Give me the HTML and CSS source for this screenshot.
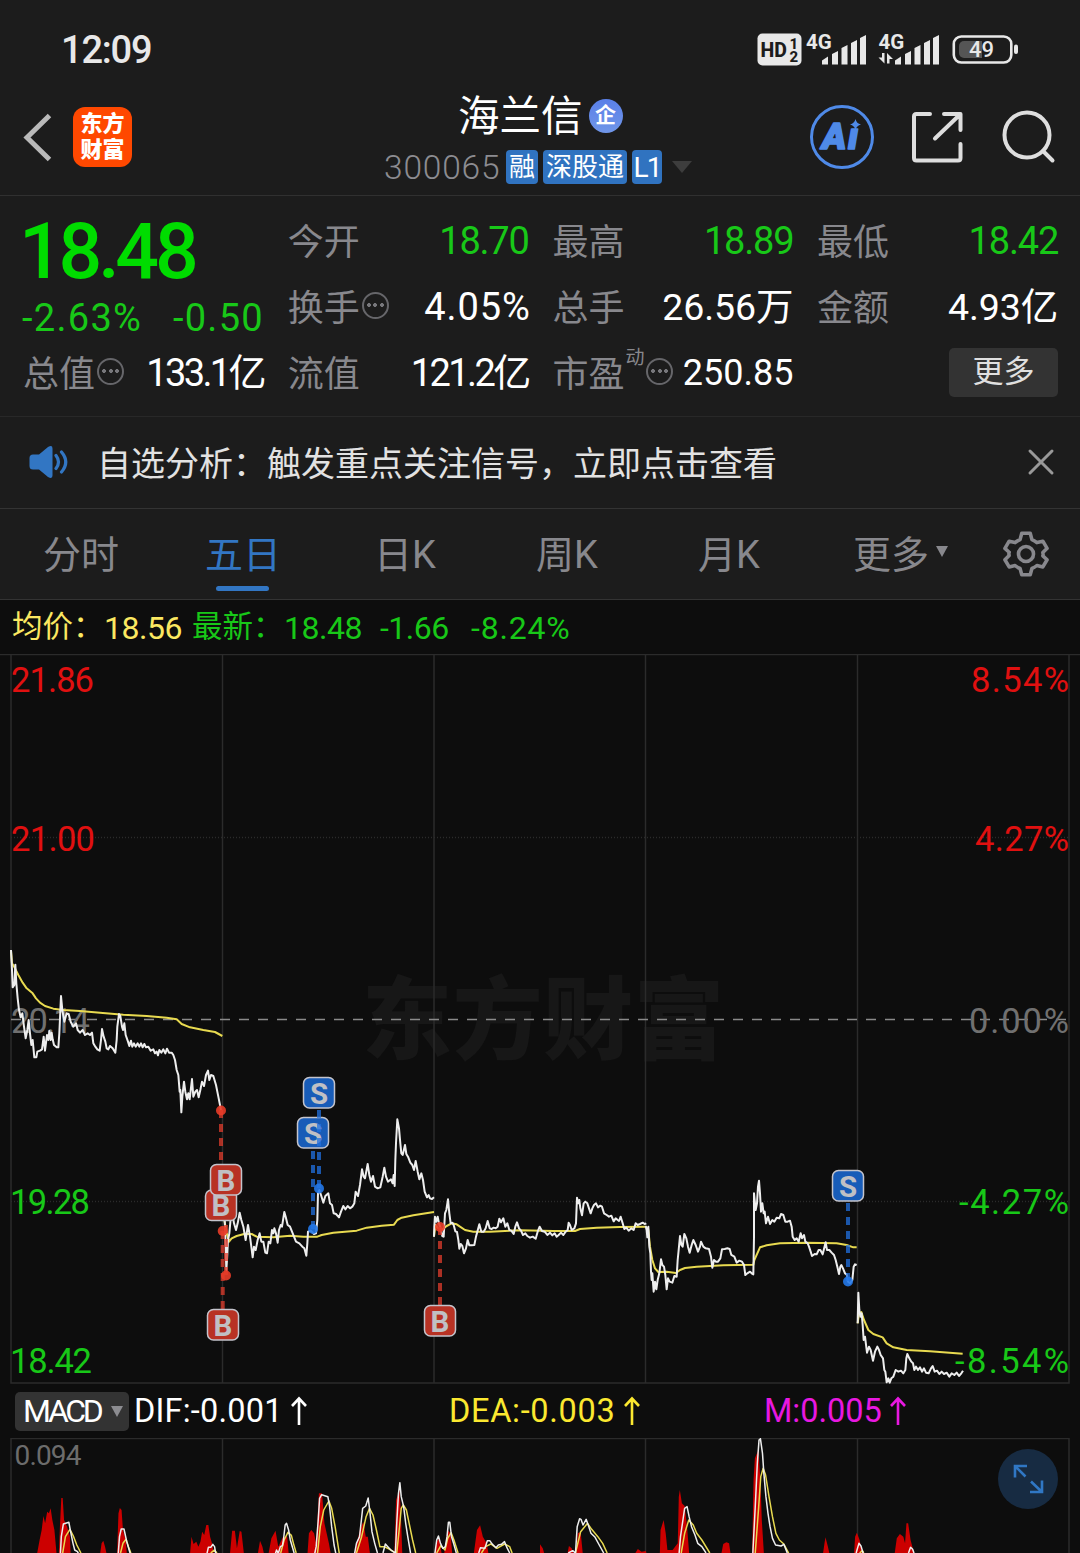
FILE: index.html
```html
<!DOCTYPE html>
<html lang="zh-CN">
<head>
    <meta charset="UTF-8">
    <meta name="viewport" content="width=device-width, initial-scale=1.0">
    <title>海兰信 300065</title>
    <link rel="stylesheet" href="styles.css">
</head>
<body>
    <div class="status-bar">
        <span class="time">12:09</span>
        <svg class="status-icons" width="264" height="36" viewBox="756 32 264 36">
            <rect x="757.500" y="33.500" width="44" height="32" rx="5" fill="#e8e8e8"/>
            <g fill="#1c1c1c" font-weight="800">
                <text x="760.500" y="56.500" font-size="19.500">HD</text>
                <text x="789.500" y="48.500" font-size="15">1</text>
                <text x="789.500" y="62" font-size="15">2</text>
            </g>
            <g fill="#e8e8e8" font-weight="700" font-size="20.500">
                <text x="806" y="49">4G</text>
                <text x="878.500" y="49">4G</text>
            </g>
            <g fill="#e8e8e8">
                <path d="M822 64.500v-4l6-4v8zM832 64.500V54l6-3v13.500zM841.500 64.500V48l6-3v19.500zM851 64.500V43l6-3v24.500zM860 64.500V38l6-3v29.500z"/>
                <path d="M895 64.500v-4l6-4v8zM905 64.500V54l6-3v13.500zM914.500 64.500V48l6-3v19.500zM924 64.500V43l6-3v24.500zM933 64.500V38l6-3v29.500z"/>
                <path d="M882 53h2.500v10.500l-6-6h3.500zM887 63.500V53l6 6h-3.500v4.500z"/>
                <rect x="1014" y="44.500" width="4" height="9.500" rx="2"/>
            </g>
            <rect x="953.800" y="36.500" width="57.500" height="26" rx="7.500" fill="none" stroke="#e8e8e8" stroke-width="2.600"/>
            <path d="M964 41h18v17h-18a5 5 0 0 1-5-5v-7a5 5 0 0 1 5-5z" fill="#555"/>
            <text x="969" y="57" font-size="22" font-weight="500" fill="#e8e8e8">49</text>
        </svg>
    </div>

    <header class="header">
        <svg class="back" width="30" height="50" viewBox="0 0 30 50"><path d="M27.500 3.500L5 25.500l22.500 22" fill="none" stroke="#b9b9b9" stroke-width="5"/></svg>
        <div class="logo"><span>东方</span><span>财富</span></div>
        <div class="title">
            <div class="name">海兰信<span class="corp">企</span></div>
            <div class="code">
                <span class="code-num">300065</span>
                <span class="tag">融</span><span class="tag wide">深股通</span><span class="tag l1">L1</span>
                <i class="caret"></i>
            </div>
        </div>
        <svg class="tools" width="250" height="66" viewBox="808 104 250 66">
            <circle cx="842" cy="137" r="30.500" fill="none" stroke="#4f8ae8" stroke-width="3"/>
            <text class="ai" x="822 848" y="149">Aı</text>
            <path d="M855.500 119q1 4.500 5.500 5.500q-4.500 1.200-5.500 5.500q-1-4.300-5.500-5.500q4.500-1.200 5.500-5.500z" fill="#4f8ae8"/>
            <g fill="none" stroke="#dedede" stroke-width="4" stroke-linecap="round" stroke-linejoin="round">
                <path d="M930 114h-13.500q-2.500 0-2.500 2.500v41.500q0 2.500 2.500 2.500h41.500q2.500 0 2.500-2.500v-14M944 114h16.500v16M960 114.500l-25 24"/>
                <circle cx="1027" cy="135" r="22.500"/>
                <path d="M1043 151l9.500 9.500"/>
            </g>
        </svg>
    </header>

    <section class="quote">
        <div class="price-block">
            <div class="price">18.48</div>
            <div class="change"><span>-2.63%</span><span>-0.50</span></div>
        </div>
        <div class="cell"><label>今开</label><b class="green">18.70</b></div>
        <div class="cell"><label>最高</label><b class="green">18.89</b></div>
        <div class="cell"><label>最低</label><b class="green">18.42</b></div>
        <div class="cell"><label>换手</label><i class="dots"></i><b class="pct">4.05%</b></div>
        <div class="cell"><label>总手</label><b class="flat">26.56万</b></div>
        <div class="cell"><label>金额</label><b class="flat">4.93亿</b></div>
        <div class="cell"><label>总值</label><i class="dots"></i><b class="tight">133.1亿</b></div>
        <div class="cell"><label>流值</label><b class="tight">121.2亿</b></div>
        <div class="cell"><label>市盈<sup>动</sup></label><i class="dots pe"></i><b class="small">250.85</b></div>
        <div class="cell"><button class="more-btn">更多</button></div>
    </section>

    <div class="notice">
        <svg width="40" height="34" viewBox="0 0 40 34">
            <path d="M4 9.500h6L19 2q4.500-2.500 4.500 1.500v27q0 4-4.500 1.500l-9-7.500H4q-3.500 0-3.500-3.500v-8q0-3.500 3.500-3.500z" fill="#3276c3"/>
            <path d="M27 10.500q5 6.500 0 13M32.500 7q8.500 10 0 20" fill="none" stroke="#3276c3" stroke-width="3.200" stroke-linecap="round"/>
        </svg>
        <span>自选分析：触发重点关注信号，立即点击查看</span>
        <svg class="close" width="28" height="28" viewBox="0 0 28 28"><path d="M3 3l22 22M25 3L3 25" stroke="#999" stroke-width="3" stroke-linecap="round"/></svg>
    </div>

    <nav class="tabs">
        <a>分时</a>
        <a class="active">五日</a>
        <a>日K</a>
        <a>周K</a>
        <a>月K</a>
        <a class="more">更多<i></i></a>
        <svg width="48" height="48" viewBox="-25.500 -25.500 51 51" fill="none" stroke="#88888d" stroke-width="3.800" stroke-linejoin="round">
            <path d="M-4.500-22h9l1.800 6.700q3 1.200 5.300 3.200l6.300-1.500l4.500 7.600l-4.500 4.500q.6 3 0 3.500l4.500 4.100l-4.500 7.600l-6.300-1.500q-2.300 2-5.300 3.200l-1.800 6.600h-9l-1.800-6.600q-3-1.200-5.300-3.200l-6.300 1.500l-4.500-7.600l4.500-4.500q-.6-3 0-3.500l-4.500-4.100l4.500-7.600l6.300 1.500q2.300-2 5.300-3.200z"/>
            <circle r="8"/>
        </svg>
    </nav>

    <div class="legend">
        <span class="avg cn">均价：</span><span class="avg">18.56</span>
        <span class="cn">最新：</span><span>18.48</span><span>-1.66</span><span class="chg">-8.24%</span>
    </div>

    <svg class="chart" width="1080" height="730" viewBox="0 654 1080 730">
        <text class="watermark" x="362" y="1052" textLength="362">东方财富</text>
        <g class="grid">
            <path d="M0 654.500H1080" />
            <path d="M11 655V1383H1069V655M222.500 655V1383M434 655V1383M645.500 655V1383M857.500 655V1383"/>
            <path d="M11 837.500H1069M11 1201.500H1069" stroke-dasharray="1 2"/>
            <path class="zero" d="M11 1019.500H1069"/>
        </g>
        <g class="axis">
            <text class="up" x="11" y="692" textLength="83">21.86</text>
            <text class="up" x="11" y="851" textLength="84">21.00</text>
            <text class="mid" x="11" y="1033" textLength="79">20.14</text>
            <text class="down" x="10" y="1214" textLength="80">19.28</text>
            <text class="down" x="10" y="1373" textLength="82">18.42</text>
            <text class="up" x="971" y="692" textLength="98">8.54%</text>
            <text class="up" x="975" y="851" textLength="94">4.27%</text>
            <text class="mid" x="969" y="1033" textLength="100">0.00%</text>
            <text class="down" x="959" y="1214" textLength="110">-4.27%</text>
            <text class="down" x="955" y="1373" textLength="114">-8.54%</text>
        </g>
        <!-- day 1 -->
        <g class="series" transform="translate(0 930) scale(.33333)">
            <polyline class="line-avg" points="33,62 36,100 45,115 55,135 68,158 80,175 98,190 108,205 120,218 135,228 160,236 190,240 240,243 300,248 370,254 440,258 500,263 530,268 545,282 570,292 610,300 645,306 667,318"/>
            <polyline points="33,60 36,120 38,172 43,165 46,104 49,160 53,205 57,240 62,262 67,250 72,290 77,325 82,300 86,270 90,310 94,345 98,330 103,382 109,382 112,365 120,362 126,358 131,320 135,362 141,315 145,330 148,303 152,330 155,308 158,328 162,345 170,352 175,352 178,310 183,198 187,240 193,275 200,250 206,252 212,275 220,290 228,280 233,300 240,308 248,300 255,315 263,310 270,315 276,308 280,340 286,350 292,358 299,362 303,330 306,297 311,320 316,335 320,355 325,358 330,348 338,355 346,368 350,330 352,290 357,252 361,258 366,290 369,300 373,280 377,315 384,335 388,348 393,332 397,350 402,340 407,350 413,340 418,350 423,340 428,352 433,342 438,352 445,350 452,362 460,358 465,370 470,365 474,376 478,360 484,368 490,358 496,370 501,356 507,368 515,368 520,375 525,390 530,420 535,435 539,485 541,480 544,547 547,500 552,455 556,485 561,508 565,490 569,508 576,447 580,500 586,485 591,480 596,502 601,480 606,455 612,468 618,435 624,422 628,450 633,435 640,438 648,465 655,500 663,540"/>
        </g>
        <!-- day 2 -->
        <g class="series" transform="translate(190 1060) scale(.33333)">
            <polyline class="line-avg" points="99,440 103,480 110,520 117,545 125,535 140,528 165,521 185,522 200,530 250,532 300,527 340,530 382,530 395,525 430,518 500,512 530,503 575,497 612,494 622,480 635,473 670,466 732,456"/>
            <polyline points="100,400 104,480 107,560 109,630 111,600 114,540 118,520 122,475 128,465 132,490 138,510 143,490 149,458 154,480 160,500 167,540 174,495 180,530 184,560 188,592 192,560 197,570 203,540 209,520 214,545 220,545 226,578 231,580 236,545 241,550 246,510 250,520 253,505 258,520 263,548 267,510 272,495 276,500 283,456 287,470 293,495 300,500 306,515 312,530 318,545 328,550 337,560 343,565 349,587 352,550 354,515 362,512 372,522 378,520 382,480 384,400 388,390 393,405 400,428 406,408 415,400 420,430 426,435 431,460 438,462 447,472 453,455 460,438 466,448 473,438 480,445 487,440 493,430 497,395 504,408 510,375 516,328 521,350 525,355 533,312 538,345 543,365 549,348 555,380 563,385 571,382 578,350 583,323 588,350 594,365 603,358 608,370 611,345 614,378 616,300 618,250 622,178 627,205 631,250 634,280 638,285 641,272 645,255 649,282 654,290 661,308 667,315 672,330 677,303 683,335 688,358 694,340 699,360 704,395 711,412 716,405 720,415 726,417 732,412"/>
        </g>
        <!-- day 3 -->
        <g class="series" transform="translate(420 1160) scale(.33333)">
            <polyline class="line-avg" points="42,230 46,195 55,205 65,210 80,198 95,190 110,193 120,200 135,210 160,215 210,215 300,211 400,213 465,213 480,207 530,203 600,201 679,200"/>
            <polyline points="42,230 43,200 45,170 49,185 53,170 57,190 62,205 67,228 71,230 75,160 79,150 84,118 88,160 92,190 97,188 101,195 106,214 111,216 115,240 118,266 122,252 127,258 132,280 138,265 143,240 148,256 155,256 163,255 168,230 172,215 178,193 184,215 191,215 197,205 203,183 209,205 215,207 221,203 227,205 233,200 238,176 243,187 250,175 256,200 262,190 268,210 274,212 281,222 286,200 291,187 297,205 303,212 309,225 316,220 322,228 330,233 338,230 347,236 353,215 359,200 366,213 374,215 382,225 390,218 397,226 404,220 410,230 416,225 423,218 430,225 437,215 443,210 446,188 450,195 455,210 463,205 468,190 471,113 475,130 478,120 481,145 486,166 491,130 496,125 502,130 507,145 512,160 517,145 522,135 528,130 534,142 541,137 546,140 552,160 560,165 567,170 574,167 581,184 587,175 593,180 597,183 602,170 608,190 613,207 619,203 626,212 634,205 641,210 647,190 653,195 660,192 668,188 674,192 679,190"/>
        </g>
        <!-- day 4 and 5 -->
        <g class="series" transform="translate(640 1150) scale(.33333)">
            <polyline class="line-avg" points="17,230 25,240 30,290 37,330 45,355 55,366 80,365 108,369 120,360 135,354 170,350 250,346 340,344 343,330 352,310 360,292 380,286 420,280 500,278 590,280 620,285 640,292 650,292"/>
            <polyline points="17,228 20,240 22,262 25,230 28,290 31,310 33,365 35,390 37,370 41,425 45,395 49,418 53,390 58,370 63,328 67,345 72,350 76,375 80,418 84,385 89,395 97,398 103,378 110,380 113,330 116,300 120,258 124,285 128,290 133,252 139,265 144,290 149,308 155,285 160,270 167,285 174,305 180,290 183,275 190,290 197,295 207,297 213,320 217,353 222,330 228,335 234,335 241,325 246,298 254,297 262,295 269,297 274,315 283,320 290,338 298,332 306,335 312,345 316,375 322,370 330,365 335,370 340,373 342,260 342,130 347,180 351,160 354,110 357,92 360,130 363,185 367,160 371,190 374,185 378,220 384,200 390,222 397,210 403,215 410,203 418,205 423,192 430,195 436,215 443,215 450,212 455,230 458,260 464,270 470,265 476,275 482,250 486,265 492,255 496,275 503,280 507,290 512,305 516,318 524,312 530,313 536,300 541,300 548,313 557,277 561,300 568,300 575,308 582,315 587,330 592,350 597,372 601,350 604,345 609,355 615,370 620,373 624,395 630,400 637,390 641,350 645,343 650,345"/>
            <polyline class="line-avg" points="653,520 657,490 664,486 672,510 685,540 700,552 728,562 740,580 760,592 800,600 870,604 968,611"/>
            <polyline points="653,520 655,428 658,480 661,500 665,490 668,525 671,570 675,560 681,608 687,590 692,600 699,632 705,605 712,590 717,600 722,615 729,625 733,660 736,665 740,697 745,685 749,698 754,685 760,680 767,660 775,665 783,662 790,670 796,660 799,625 802,612 808,625 814,635 819,640 823,660 828,650 834,660 840,652 846,665 852,655 858,668 866,670 873,655 878,648 884,665 891,662 898,672 905,665 912,672 920,668 928,680 935,670 943,675 950,668 957,678 964,670 969,662"/>
        </g>
        <!-- trade marks -->
        <g class="stem buy">
            <path d="M221 1110V1166M222.700 1309V1231M226 1275V1196M440 1305V1227"/>
            <circle cx="221" cy="1110.500" r="5"/><circle cx="222.700" cy="1231" r="5"/><circle cx="226" cy="1275.500" r="5"/><circle cx="440" cy="1227" r="5"/>
        </g>
        <g class="mark buy">
            <rect x="205.500" y="1190" width="31" height="30.500" rx="6"/><text x="221" y="1215.500">B</text>
            <rect x="210.500" y="1164.500" width="31" height="30.500" rx="6"/><text x="226" y="1190.500">B</text>
            <rect x="207.500" y="1309.500" width="31" height="30.500" rx="6"/><text x="223" y="1335.500">B</text>
            <rect x="424.500" y="1305.500" width="31" height="30.500" rx="6"/><text x="440" y="1331.500">B</text>
        </g>
        <g class="mark sell">
            <rect x="303.500" y="1077.500" width="31" height="30.500" rx="6"/><text x="319" y="1103.500">S</text>
            <rect x="297.500" y="1117.500" width="31" height="30.500" rx="6"/><text x="313" y="1143.500">S</text>
            <rect x="832.500" y="1170.500" width="31" height="30.500" rx="6"/><text x="848" y="1196.500">S</text>
        </g>
        <g class="stem sell">
            <path d="M319 1110V1188M313 1151V1229M848 1203V1281"/>
            <circle cx="319" cy="1188.500" r="5"/><circle cx="313" cy="1229" r="5"/><circle cx="848" cy="1281.500" r="5"/>
        </g>
    </svg>

    <div class="macd-bar">
        <span class="pill">MACD<i></i></span>
        <span class="dif">DIF:-0.001<svg width="16" height="30" viewBox="0 0 16 30"><path d="M8 29V3M1 10L8 2.500l7 7.500"/></svg></span>
        <span class="dea">DEA:-0.003<svg width="16" height="30" viewBox="0 0 16 30"><path d="M8 29V3M1 10L8 2.500l7 7.500"/></svg></span>
        <span class="m">M:0.005<svg width="16" height="30" viewBox="0 0 16 30"><path d="M8 29V3M1 10L8 2.500l7 7.500"/></svg></span>
    </div>

    <svg class="chart" width="1080" height="115" viewBox="0 1438 1080 115">
        <path class="grid" d="M11 1553V1438.500H1069V1553M222.500 1438V1553M434 1438V1553M645.500 1438V1553M857.500 1438V1553"/>
        <text class="macd-max" x="14.500" y="1465" textLength="67">0.094</text>
        <g class="series thin" transform="translate(0 1380) scale(.3444 .33333)">
            <path class="bars" d="M108 519L115 480L121 450L126 408L131 430L137 395L142 400L147 385L152 420L158 450L164 519zM171 519L174 440L178 354L182 354L186 420L195 440L203 470L205 519zM291 519L295 490L300 482L305 500L309 519zM340 519L344 400L348 384L353 390L357 450L365 480L368 519zM552 519L556 470L562 492L570 485L576 500L582 485L587 455L593 465L599 435L605 435L610 470L617 495L620 519zM668 519L674 452L682 452L688 505L696 453L701 455L708 519zM749 519L755 482L762 500L766 519zM780 519L788 475L800 452L808 500L822 470L834 470L838 519zM893 519L897 460L904 450L912 460L918 490L926 340L935 340L942 430L955 490L960 519zM1030 519L1045 450L1055 425L1062 470L1068 470L1074 519zM1145 519L1150 360L1160 330L1164 400L1168 519zM1262 519L1268 485L1275 475L1282 519zM1290 519L1300 450L1308 460L1313 519zM1376 519L1385 450L1394 436L1402 470L1413 490L1418 519z"/>
            <path class="line-avg" d="M182 519L190 470L203 448L213 468L223 495L235 519M350 519L357 490L366 478L373 500L380 519M612 519L622 510L630 519M815 519L825 480L836 457L846 466L852 490L860 519M922 519L930 440L940 390L955 363L963 385L973 440L985 519M1035 519L1050 470L1063 410L1073 385L1083 405L1093 450L1103 500L1115 500L1130 507L1148 519M1152 519L1160 440L1165 385L1171 375L1180 390L1188 430L1198 480L1207 519M1268 519L1280 497L1292 510L1300 475L1310 458L1318 480L1330 519M1398 519L1410 500L1425 492L1443 505L1465 492L1480 500L1487 519"/>
            <path d="M175 530L178 470L184 432L200 427L205 455L212 490L217 510L225 515L237 540M342 540L347 470L352 447L360 447L368 485L375 510L381 530M600 525L605 502L612 502L618 493L623 500L628 530M797 530L803 510L808 520L814 500L820 497L823 480L828 435L832 430L838 450L843 480L850 505L857 530M912 530L918 500L924 420L928 355L934 344L952 350L957 380L963 440L970 495L977 530M1028 530L1035 490L1044 470L1053 385L1062 378L1069 354L1074 395L1080 455L1088 490L1096 519M1112 519L1119 492L1126 500L1135 510L1148 519L1152 430L1157 340L1161 308L1165 350L1172 380L1178 430L1184 470L1192 519M1263 519L1268 480L1273 468L1279 490L1286 505L1293 500L1298 470L1302 427L1306 427L1311 470L1317 490L1325 519M1390 519L1395 503L1408 505L1415 482L1422 482L1430 493L1440 503L1447 495L1456 493L1465 485L1472 503L1480 519"/>
        </g>
        <g class="series thin" transform="translate(540 1380) scale(.3444 .33333)">
            <path class="bars" d="M0 519L0 493L8 505L12 519zM80 519L84 498L92 505L97 519zM105 519L110 460L118 455L124 519zM277 519L284 507L295 515L307 513L309 519zM348 519L350 450L359 420L365 460L370 510L385 510L400 490L403 350L406 330L412 370L420 378L427 440L433 519zM527 519L532 492L541 487L549 490L553 519zM616 519L620 300L624 235L634 210L640 300L644 420L650 519zM822 519L826 490L829 472L836 500L840 519zM912 519L915 470L920 458L928 480L935 519zM1030 519L1036 475L1045 462L1055 470L1060 490L1064 430L1069 430L1076 480L1086 519z"/>
            <path class="line-avg" d="M103 519L118 455L138 430L150 448L168 470L182 490L195 519M410 519L420 460L432 420L445 435L455 460L470 480L493 519M625 519L635 380L641 290L648 265L655 285L665 350L675 410L685 460L695 480L708 492L722 519M928 519L936 512L940 519"/>
            <path d="M82 519L95 512L103 519L108 440L115 416L119 418L125 435L134 418L140 435L148 460L160 472L172 495L185 519M404 519L408 470L415 420L420 385L427 380L433 410L440 440L450 465L458 490L470 500L482 519M618 519L625 380L631 250L636 180L640 176L646 220L650 280L656 350L662 400L668 440L675 475L684 495L700 498L708 493L718 519M918 519L926 490L932 498L938 519M1070 519L1076 502L1082 508L1086 519"/>
        </g>
        <circle cx="1028" cy="1479" r="30" fill="#172b42"/>
        <path d="M1015 1477.500V1466H1027M1015 1466L1025.500 1476.500M1042 1480.500V1492H1030M1042 1492L1031 1481.500" fill="none" stroke="#3077c4" stroke-width="2.600"/>
    </svg>
</body>
</html>
```
FILE: styles.css
```css
* {
    box-sizing: border-box;
}

body {
    margin: 0;
    width: 1080px;
    height: 1553px;
    overflow: hidden;
    background-color: #1c1c1c;
    color: #fff;
    font-family: Roboto, "Noto Sans CJK SC", sans-serif;
}

svg {
    display: block;
    flex-shrink: 0;
}

.status-bar {
    display: flex;
    justify-content: space-between;
    align-items: center;
    height: 100px;
    padding: 0 60px 0 61px;
}

.time {
    font-size: 38px;
    font-weight: 500;
    letter-spacing: -1.2px;
    color: #e8e8e8;
}

/* header */
.header {
    display: flex;
    height: 96px;
    padding-left: 22px;
    border-bottom: 1px solid #303030;
}

.back {
    margin-top: 12px;
}

.logo {
    display: flex;
    flex-direction: column;
    align-items: center;
    justify-content: center;
    width: 59px;
    height: 60px;
    margin: 7px 0 0 21px;
    border-radius: 12px;
    background-color: #ff4800;
    font-size: 22px;
    font-weight: 900;
    line-height: 26px;
}

.title {
    display: flex;
    flex-direction: column;
    width: 310px;
    margin-left: 252px;
}

.name {
    display: flex;
    align-items: center;
    height: 40px;
    margin: -4px 0 0 74px;
    font-size: 41.500px;
    line-height: 43px;
}

.corp {
    width: 34px;
    height: 34px;
    margin-left: 6px;
    border-radius: 50%;
    background: linear-gradient(#5a80e8, #7096e8);
    font-size: 21px;
    font-weight: 700;
    line-height: 33px;
    text-align: center;
}

.code {
    display: flex;
    align-items: center;
    height: 34px;
    margin-top: 14px;
}

.code-num {
    width: 122px;
    font-size: 33.500px;
    font-weight: 300;
    letter-spacing: .8px;
    color: #8c8c91;
}

.tag {
    width: 32px;
    height: 34px;
    margin-right: 5px;
    border-radius: 4px;
    background-color: #3073c0;
    font-size: 26px;
    line-height: 35px;
    text-align: center;
}

.tag.wide {
    width: 84px;
}

.tag.l1 {
    width: 30px;
    font-size: 28px;
    letter-spacing: -2px;
}

.caret {
    margin-left: 5px;
    border: 10px solid transparent;
    border-top: 12px solid #3d3d3d;
    border-bottom: 0;
}

.tools {
    margin: 4px 0 0 114px;
}

.ai {
    font-size: 37px;
    font-weight: 900;
    font-style: italic;
    fill: #4f8ae8;
    stroke: #4f8ae8;
    stroke-width: 1.600;
    stroke-linejoin: round;
}

/* quote panel */
.quote {
    display: grid;
    grid-template-columns: repeat(4, 241px);
    grid-template-rows: repeat(3, 66px);
    column-gap: 23.700px;
    height: 221px;
    padding: 12px 0 0 23px;
    border-bottom: 1px solid #282828;
}

.price-block {
    grid-row: span 2;
    color: #00dc00;
}

.price {
    height: 84px;
    margin-left: -4px;
    font-size: 77px;
    font-weight: 500;
    line-height: 88px;
    letter-spacing: -4.200px;
}

.change {
    display: flex;
    justify-content: space-between;
    margin-left: -1px;
    font-size: 38px;
    line-height: 52px;
    color: #18c818;
}

.change span {
    letter-spacing: 1.300px;
}

.cell {
    display: flex;
    align-items: center;
    height: 66px;
}

.cell label {
    position: relative;
    margin-top: -5px;
    font-size: 36px;
    color: #88888d;
}

.cell sup {
    position: absolute;
    top: -1px;
    left: 73px;
    font-size: 19px;
    line-height: 1.500;
}

.cell b {
    margin-left: auto;
    font-size: 38px;
    font-weight: 400;
    white-space: nowrap;
}

.cell .green {
    color: #18c818;
    letter-spacing: -1.200px;
}

.cell .pct {
    margin-right: -2px;
    letter-spacing: .9px;
}

.cell .flat {
    margin-top: -7px;
    font-size: 37.500px;
    letter-spacing: -.1px;
}

.cell .tight {
    margin-top: -7px;
    letter-spacing: -2.600px;
}

.cell .small {
    font-size: 36px;
}

/* circled ellipsis behind a label */
.dots {
    width: 27px;
    height: 27px;
    margin: -4px 0 0 2px;
    border: 2px solid #66666a;
    border-radius: 50%;
    background: radial-gradient(circle, #77777b 1.600px, transparent 2.200px) center / 6px 6px no-repeat,
        radial-gradient(circle, #77777b 1.600px, transparent 2.200px) 2px center / 6px 6px no-repeat,
        radial-gradient(circle, #77777b 1.600px, transparent 2.200px) 15px center / 6px 6px no-repeat;
}

.dots.pe {
    margin-left: 22px;
}

.more-btn {
    width: 109px;
    height: 49px;
    margin: 0 0 2px auto;
    border: 0;
    border-radius: 5px;
    background-color: #333;
    color: #e0e0e0;
    font-family: inherit;
    font-size: 31px;
    line-height: 46px;
}

/* notice */
.notice {
    display: flex;
    align-items: center;
    height: 92px;
    padding: 0 25px 2px 29px;
    border-bottom: 1px solid #333;
    font-size: 34px;
    color: #e2e2e2;
}

.notice span {
    margin-left: 28px;
}

.notice .close {
    margin-left: auto;
}

/* period tabs */
.tabs {
    display: flex;
    align-items: center;
    height: 91px;
    border-bottom: 1px solid #333;
    font-size: 38px;
    color: #88888d;
}

.tabs a {
    position: relative;
    width: 162px;
    margin-top: -5px;
    text-align: center;
}

.tabs .active {
    color: #3276c3;
}

.tabs .active::after {
    content: "";
    position: absolute;
    left: 54px;
    bottom: -12px;
    width: 53px;
    height: 5px;
    border-radius: 3px;
    background-color: #3276c3;
}

.tabs .more {
    display: flex;
    align-items: center;
    padding-left: 43px;
}

.tabs .more i {
    margin-left: 7px;
    border: 6.500px solid transparent;
    border-top: 11px solid #88888d;
    border-bottom: 0;
}

.tabs svg {
    margin-left: 30px;
}

.legend {
    display: grid;
    grid-template-columns: 92px 88px 92px 96px 91px auto;
    height: 54px;
    padding-left: 12px;
    background-color: #0d0d0d;
    font-size: 32px;
    line-height: 56px;
    letter-spacing: -.5px;
    white-space: nowrap;
    color: #18c818;
}

.legend .cn {
    font-size: 30.500px;
    line-height: 53px;
    letter-spacing: 0;
}

.legend .avg {
    color: #fbe861;
}

.legend .chg {
    letter-spacing: .8px;
}

/* charts */
.chart {
    background-color: #0d0d0d;
}

.grid {
    fill: none;
    stroke: #2b2b2b;
    stroke-width: 1.500;
}

.grid .zero {
    stroke: #8a8a8a;
    stroke-dasharray: 10 9;
}

.watermark {
    font-size: 90px;
    font-weight: 900;
    fill: #171717;
}

.axis {
    font-size: 34.500px;
}

.up {
    fill: #e01010;
}

.mid {
    fill: #707070;
}

.down {
    fill: #18c818;
}

.series {
    fill: none;
    stroke: #eee;
    stroke-width: 2;
    stroke-linejoin: round;
}

.series * {
    vector-effect: non-scaling-stroke;
}

.series .line-avg {
    stroke: #e8da50;
}

.thin {
    stroke-width: 1.500;
}

.series .bars {
    fill: #cc0000;
    stroke: none;
}

.stem path {
    fill: none;
    stroke-width: 4;
    stroke-dasharray: 8 6;
    opacity: .75;
}

.stem.buy {
    fill: #e83c28;
    stroke: #e03c2c;
}

.stem.sell {
    fill: #2478e8;
    stroke: #2070e0;
}

.stem circle {
    stroke: none;
    opacity: .9;
}

.mark {
    stroke: #c4c4cc;
    stroke-width: 1.500;
}

.mark.buy {
    fill: #b83224;
}

.mark.sell {
    fill: #185cb8;
}

.mark text {
    font-size: 29.500px;
    font-weight: 700;
    text-anchor: middle;
    fill: #c0c0c4;
    stroke: none;
}

.macd-bar {
    display: grid;
    grid-template-columns: 119px 315px 315px auto;
    align-items: center;
    height: 54px;
    padding-left: 15px;
    background-color: #0d0d0d;
    font-size: 32.500px;
}

.pill {
    display: flex;
    align-items: center;
    width: 114px;
    height: 39px;
    padding-left: 8px;
    border-radius: 5px;
    background-color: #333;
    font-size: 32px;
    letter-spacing: -3.300px;
}

.pill i {
    margin-left: 10px;
    border: 6.500px solid transparent;
    border-top: 11px solid #8c8c90;
    border-bottom: 0;
}

.macd-bar svg {
    display: inline-block;
    margin-left: 8px;
    vertical-align: -4px;
    fill: none;
    stroke: currentColor;
    stroke-width: 2.600;
}

.dif {
    letter-spacing: .2px;
}

.dea {
    color: #fbe830;
    letter-spacing: .700px;
}

.m {
    color: #e818e0;
}

.macd-max {
    font-size: 28px;
    fill: #6c6c6c;
}
```
